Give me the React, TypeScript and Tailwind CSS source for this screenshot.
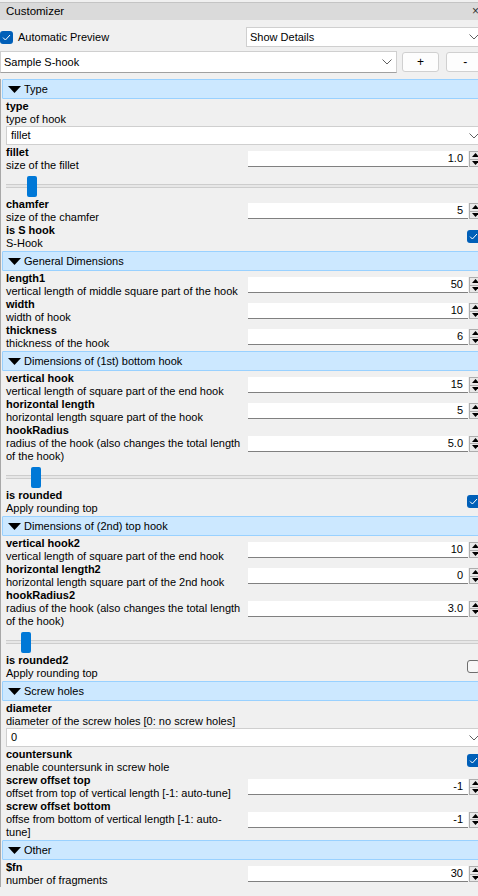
import type { ReactNode } from 'react';

type Param =
  | { kind: 'spin'; label: string; desc: string[]; value: string }
  | { kind: 'check'; label: string; desc: string[]; checked: boolean }
  | { kind: 'select'; label: string; desc: string[]; value: string }
  | { kind: 'slider'; label: string; desc: string[]; value: string; thumb: number };

interface Section {
  title: string;
  params: Param[];
}

const SECTIONS: Section[] = [
  {
    title: 'Type',
    params: [
      { kind: 'select', label: 'type', desc: ['type of hook'], value: 'fillet' },
      { kind: 'slider', label: 'fillet', desc: ['size of the fillet'], value: '1.0', thumb: 21 },
      { kind: 'spin', label: 'chamfer', desc: ['size of the chamfer'], value: '5' },
      { kind: 'check', label: 'is S hook', desc: ['S-Hook'], checked: true },
    ],
  },
  {
    title: 'General Dimensions',
    params: [
      { kind: 'spin', label: 'length1', desc: ['vertical length of middle square part of the hook'], value: '50' },
      { kind: 'spin', label: 'width', desc: ['width of hook'], value: '10' },
      { kind: 'spin', label: 'thickness', desc: ['thickness of the hook'], value: '6' },
    ],
  },
  {
    title: 'Dimensions of (1st) bottom hook',
    params: [
      { kind: 'spin', label: 'vertical hook', desc: ['vertical length of square part of the end hook'], value: '15' },
      { kind: 'spin', label: 'horizontal length', desc: ['horizontal length square part of the hook'], value: '5' },
      {
        kind: 'slider',
        label: 'hookRadius',
        desc: ['radius of the hook (also changes the total length', 'of the hook)'],
        value: '5.0',
        thumb: 25,
      },
      { kind: 'check', label: 'is rounded', desc: ['Apply rounding top'], checked: true },
    ],
  },
  {
    title: 'Dimensions of (2nd) top hook',
    params: [
      { kind: 'spin', label: 'vertical hook2', desc: ['vertical length of square part of the end hook'], value: '10' },
      { kind: 'spin', label: 'horizontal length2', desc: ['horizontal length square part of the 2nd hook'], value: '0' },
      {
        kind: 'slider',
        label: 'hookRadius2',
        desc: ['radius of the hook (also changes the total length', 'of the hook)'],
        value: '3.0',
        thumb: 15,
      },
      { kind: 'check', label: 'is rounded2', desc: ['Apply rounding top'], checked: false },
    ],
  },
  {
    title: 'Screw holes',
    params: [
      { kind: 'select', label: 'diameter', desc: ['diameter of the screw holes [0: no screw holes]'], value: '0' },
      { kind: 'check', label: 'countersunk', desc: ['enable countersunk in screw hole'], checked: true },
      { kind: 'spin', label: 'screw offset top', desc: ['offset from top of vertical length [-1: auto-tune]'], value: '-1' },
      {
        kind: 'spin',
        label: 'screw offset bottom',
        desc: ['offse from bottom of vertical length [-1: auto-', 'tune]'],
        value: '-1',
      },
    ],
  },
  {
    title: 'Other',
    params: [{ kind: 'spin', label: '$fn', desc: ['number of fragments'], value: '30' }],
  },
];

function Chevron() {
  return (
    <svg width="10" height="6" viewBox="0 0 10 6" className="shrink-0">
      <polyline points="0.5,0.5 5,5 9.5,0.5" fill="none" stroke="#606060" strokeWidth="1" />
    </svg>
  );
}

function CheckBox({ checked }: { checked: boolean }) {
  if (!checked) {
    return <span className="block w-[13px] h-[13px] rounded-[3px] border border-[#6e6e6e] bg-[#f7f7f7]" />;
  }
  return (
    <span className="flex w-[13px] h-[13px] items-center justify-center rounded-[3px] bg-[#005fb8]">
      <svg width="9" height="7" viewBox="0 0 9 7">
        <polyline points="1,3.6 3.4,6 8,1" fill="none" stroke="#ffffff" strokeWidth="1" />
      </svg>
    </span>
  );
}

function SpinBox({ value }: { value: string }) {
  return (
    <div className="flex h-[16px] w-[237px]">
      <div className="flex w-[220px] items-center justify-end border-b border-[#808080] bg-white pr-[5px] leading-none">
        {value}
      </div>
      <div className="ml-px flex w-[16px] flex-col border border-[#adadad] bg-[#e9e9e9]">
        <div className="flex flex-1 items-center pl-[2px] border-b border-[#adadad]">
          <svg width="7" height="4" viewBox="0 0 7 4">
            <polygon points="0,4 3.5,0 7,4" fill="#000" />
          </svg>
        </div>
        <div className="flex flex-1 items-center pl-[2px]">
          <svg width="7" height="4" viewBox="0 0 7 4">
            <polygon points="0,0 3.5,4 7,0" fill="#000" />
          </svg>
        </div>
      </div>
    </div>
  );
}

function ComboField({ value, className }: { value: string; className: string }) {
  return (
    <div className={`flex items-center justify-between bg-white border border-[#cfcfcf] ${className}`}>
      <span>{value}</span>
      <Chevron />
    </div>
  );
}

function Labels({ label, desc }: { label: string; desc: string[] }) {
  return (
    <div className="w-[247px] shrink-0 pl-[5px]">
      <div className="font-bold">{label}</div>
      {desc.map((d) => (
        <div key={d}>{d}</div>
      ))}
    </div>
  );
}

function Row({ label, desc, children }: { label: string; desc: string[]; children?: ReactNode }) {
  return (
    <div className="flex">
      <Labels label={label} desc={desc} />
      <div className="flex flex-1 items-center">{children}</div>
    </div>
  );
}

function Slider({ thumb }: { thumb: number }) {
  return (
    <div className="relative h-[26px] pl-[5px] pt-[12px]">
      <div className="h-[4px] border-y border-[#cdcdcd] bg-[#e7e7e7]" />
      <div
        className="absolute top-[4px] h-[21px] w-[10px] rounded-[2px] bg-[#0078d7]"
        style={{ left: 5 + thumb }}
      />
    </div>
  );
}

function ParamRow({ p }: { p: Param }) {
  switch (p.kind) {
    case 'spin':
      return (
        <Row label={p.label} desc={p.desc}>
          <SpinBox value={p.value} />
        </Row>
      );
    case 'check':
      return (
        <Row label={p.label} desc={p.desc}>
          <div className="ml-[219px] -mt-[2px]">
            <CheckBox checked={p.checked} />
          </div>
        </Row>
      );
    case 'select':
      return (
        <div>
          <Row label={p.label} desc={p.desc} />
          <div className="pb-px pl-[5px]">
            <ComboField value={p.value} className="h-[19px] pl-[4px] pr-[4px]" />
          </div>
        </div>
      );
    case 'slider':
      return (
        <div>
          <Row label={p.label} desc={p.desc}>
            <SpinBox value={p.value} />
          </Row>
          <Slider thumb={p.thumb} />
        </div>
      );
  }
}

function SectionHeader({ title }: { title: string }) {
  return (
    <div className="my-px ml-px flex h-[20px] items-center gap-[3px] rounded-[1px] border border-[#99d1ff] bg-[#cce8ff] pl-[5px]">
      <svg width="13" height="7" viewBox="0 0 13 7">
        <polygon points="0,0 13,0 6.5,7" fill="#000" />
      </svg>
      <span>{title}</span>
    </div>
  );
}

export default function App() {
  return (
    <div className="h-[896px] w-[478px] overflow-hidden bg-[#f0f0f0] font-['Liberation_Sans',Arial,sans-serif] text-[11px] leading-[13px] text-black">
      <div className="w-[484px]">
        {/* title bar */}
        <div className="mt-[2px] flex h-[18px] items-center justify-between border-t border-[#c4c4c4] bg-[#dadada] pl-[6px] pr-[5px] text-[11.5px]">
          <span>Customizer</span>
          <span className="text-[12px] text-[#333]">×</span>
        </div>

        {/* preview + details */}
        <div className="flex h-[31px] items-center pt-[3px]">
          <div className="flex w-[246px] items-center gap-[5px]">
            <CheckBox checked />
            <span>Automatic Preview</span>
          </div>
          <ComboField value="Show Details" className="h-[20px] w-[238px] pl-[3px] pr-[4px]" />
        </div>

        {/* preset */}
        <div className="flex items-center">
          <ComboField value="Sample S-hook" className="h-[22px] w-[400px] pl-[3px] pr-[4px] border-b-[#a0a0a0]" />
          <button className="ml-[5px] h-[20px] w-[38px] rounded-[3px] border border-[#d0d0d0] bg-[#fdfdfd] text-[12px]">
            +
          </button>
          <button className="ml-[7px] h-[20px] w-[38px] rounded-[3px] border border-[#d0d0d0] bg-[#fdfdfd] text-[12px]">
            -
          </button>
        </div>

        <div className="mt-[6px] border-l border-[#a8a8a8]">
          {SECTIONS.map((s) => (
            <div key={s.title}>
              <SectionHeader title={s.title} />
              {s.params.map((p) => (
                <ParamRow key={p.label} p={p} />
              ))}
            </div>
          ))}
        </div>
      </div>
    </div>
  );
}
